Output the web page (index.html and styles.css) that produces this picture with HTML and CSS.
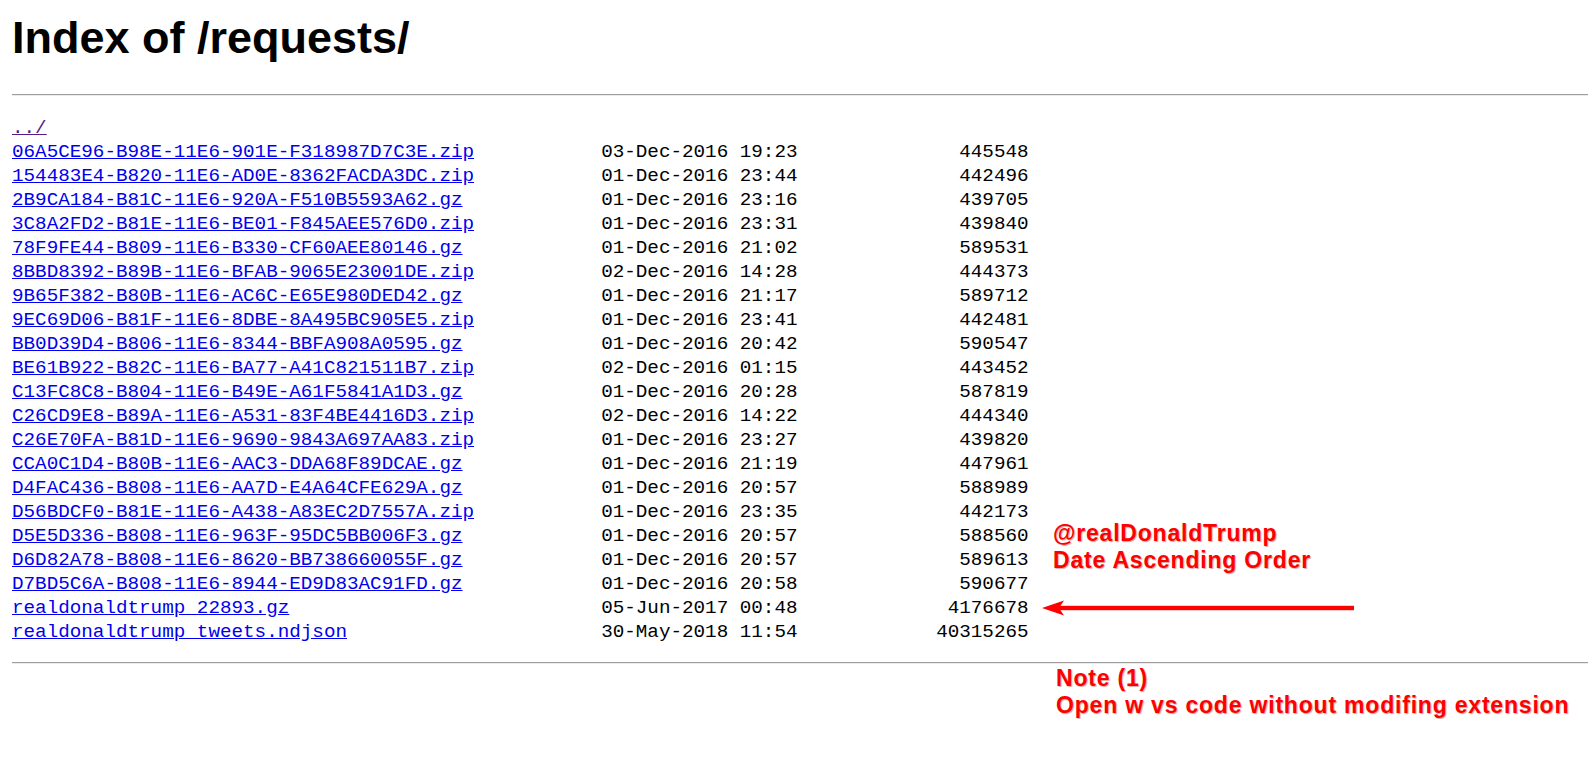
FILE: index.html
```html
<!DOCTYPE html>
<html>
<head>
<meta charset="utf-8">
<title>Index of /requests/</title>
<link rel="stylesheet" href="styles.css">
</head>
<body>
<h1 class="title">Index of /requests/</h1>
<hr class="rule">
<div class="listing">
  <div class="row"><a class="visited" href="#">../</a></div>
  <div class="row"><a href="#">06A5CE96-B98E-11E6-901E-F318987D7C3E.zip</a><span>03-Dec-2016 19:23</span><span class="size">445548</span></div>
  <div class="row"><a href="#">154483E4-B820-11E6-AD0E-8362FACDA3DC.zip</a><span>01-Dec-2016 23:44</span><span class="size">442496</span></div>
  <div class="row"><a href="#">2B9CA184-B81C-11E6-920A-F510B5593A62.gz</a><span>01-Dec-2016 23:16</span><span class="size">439705</span></div>
  <div class="row"><a href="#">3C8A2FD2-B81E-11E6-BE01-F845AEE576D0.zip</a><span>01-Dec-2016 23:31</span><span class="size">439840</span></div>
  <div class="row"><a href="#">78F9FE44-B809-11E6-B330-CF60AEE80146.gz</a><span>01-Dec-2016 21:02</span><span class="size">589531</span></div>
  <div class="row"><a href="#">8BBD8392-B89B-11E6-BFAB-9065E23001DE.zip</a><span>02-Dec-2016 14:28</span><span class="size">444373</span></div>
  <div class="row"><a href="#">9B65F382-B80B-11E6-AC6C-E65E980DED42.gz</a><span>01-Dec-2016 21:17</span><span class="size">589712</span></div>
  <div class="row"><a href="#">9EC69D06-B81F-11E6-8DBE-8A495BC905E5.zip</a><span>01-Dec-2016 23:41</span><span class="size">442481</span></div>
  <div class="row"><a href="#">BB0D39D4-B806-11E6-8344-BBFA908A0595.gz</a><span>01-Dec-2016 20:42</span><span class="size">590547</span></div>
  <div class="row"><a href="#">BE61B922-B82C-11E6-BA77-A41C821511B7.zip</a><span>02-Dec-2016 01:15</span><span class="size">443452</span></div>
  <div class="row"><a href="#">C13FC8C8-B804-11E6-B49E-A61F5841A1D3.gz</a><span>01-Dec-2016 20:28</span><span class="size">587819</span></div>
  <div class="row"><a href="#">C26CD9E8-B89A-11E6-A531-83F4BE4416D3.zip</a><span>02-Dec-2016 14:22</span><span class="size">444340</span></div>
  <div class="row"><a href="#">C26E70FA-B81D-11E6-9690-9843A697AA83.zip</a><span>01-Dec-2016 23:27</span><span class="size">439820</span></div>
  <div class="row"><a href="#">CCA0C1D4-B80B-11E6-AAC3-DDA68F89DCAE.gz</a><span>01-Dec-2016 21:19</span><span class="size">447961</span></div>
  <div class="row"><a href="#">D4FAC436-B808-11E6-AA7D-E4A64CFE629A.gz</a><span>01-Dec-2016 20:57</span><span class="size">588989</span></div>
  <div class="row"><a href="#">D56BDCF0-B81E-11E6-A438-A83EC2D7557A.zip</a><span>01-Dec-2016 23:35</span><span class="size">442173</span></div>
  <div class="row"><a href="#">D5E5D336-B808-11E6-963F-95DC5BB006F3.gz</a><span>01-Dec-2016 20:57</span><span class="size">588560</span></div>
  <div class="row"><a href="#">D6D82A78-B808-11E6-8620-BB738660055F.gz</a><span>01-Dec-2016 20:57</span><span class="size">589613</span></div>
  <div class="row"><a href="#">D7BD5C6A-B808-11E6-8944-ED9D83AC91FD.gz</a><span>01-Dec-2016 20:58</span><span class="size">590677</span></div>
  <div class="row"><a href="#">realdonaldtrump_22893.gz</a><span>05-Jun-2017 00:48</span><span class="size">4176678</span></div>
  <div class="row"><a href="#">realdonaldtrump_tweets.ndjson</a><span>30-May-2018 11:54</span><span class="size">40315265</span></div>

  <div class="callout">@realDonaldTrump<br>Date Ascending Order</div>
  <svg class="arrow" width="316" height="18" viewBox="0 0 316 18">
    <rect x="16" y="6.8" width="298" height="4.4" fill="#ff0000"/>
    <polygon points="2,9 24,1.5 19,9 24,16.5" fill="#ff0000"/>
  </svg>
</div>
<hr class="rule rule-bottom">
<div class="note">Note (1)<br>Open w vs code without modifing extension</div>
</body>
</html>
```

FILE: styles.css
```css
html, body {
  background: #ffffff;
}

body {
  margin: 12px 0 0 12px;
  color: #000000;
}

.title {
  margin: 0 0 31px 0;
  font-family: "Liberation Sans", Arial, sans-serif;
  font-weight: bold;
  font-size: 45px;
  line-height: 51px;
}

.rule {
  margin: 0;
  height: 0;
  border: 0;
  border-top: 1px solid #9d9d9d;
  border-bottom: 1px solid #ececec;
}

.listing {
  position: relative;
  margin: 20px 0 18px 0;
  font-family: "Liberation Mono", "DejaVu Sans Mono", monospace;
  font-size: 19.25px;
  line-height: 24px;
}

.row {
  display: grid;
  grid-template-columns: 51ch 17ch 20ch;
  height: 24px;
  white-space: pre;
}

.row a {
  justify-self: start;
  color: #0000ee;
  text-decoration: underline;
}

.row a.visited {
  color: #551a8b;
}

.size {
  text-align: right;
}

.callout,
.note {
  font-family: "Liberation Sans", Arial, sans-serif;
  font-weight: bold;
  font-size: 23px;
  line-height: 27px;
  letter-spacing: 0.8px;
  color: #ff0000;
  text-shadow: 1px 1px 1px rgba(120, 0, 0, 0.35);
}

.callout {
  position: absolute;
  left: 1041px;
  top: 404px;
  white-space: nowrap;
}

.arrow {
  position: absolute;
  left: 1028px;
  top: 483px;
  display: block;
}

.note {
  margin-top: 1px;
  padding-left: 1044px;
  white-space: nowrap;
}
```
